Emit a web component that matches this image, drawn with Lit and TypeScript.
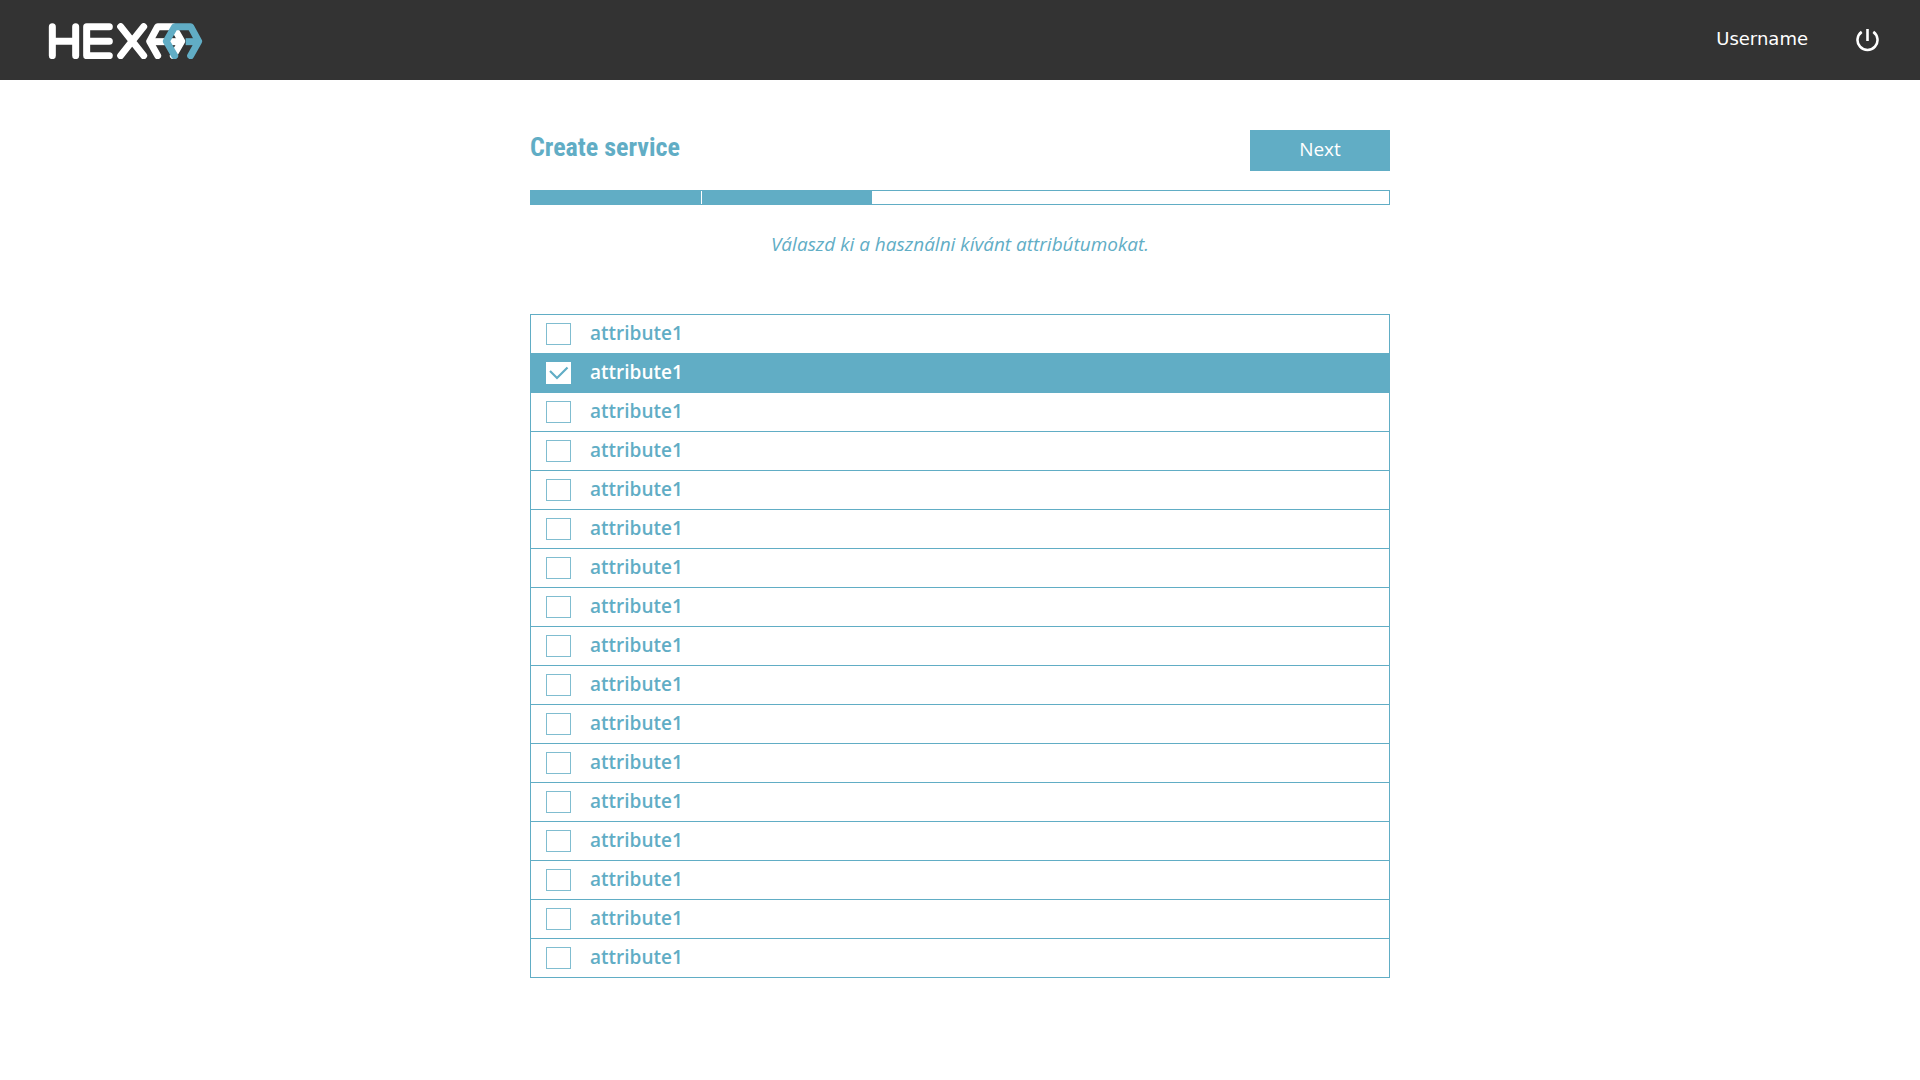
import { LitElement, html, css } from "lit";
import { customElement, state } from "lit/decorators.js";
import { classMap } from "lit/directives/class-map.js";

interface Attribute {
  name: string;
  selected: boolean;
}

@customElement("app-logo")
export class AppLogo extends LitElement {
  static styles = css`
    :host {
      display: block;
    }
    .logo {
      display: block;
      width: 156px;
      height: 36px;
      fill: none;
      stroke-width: 21;
      stroke-linecap: round;
      stroke-linejoin: round;
    }
    .light {
      stroke: #fff;
    }
    .accent {
      stroke: #61adc5;
    }
    .bar {
      stroke-linecap: butt;
    }
  `;

  render() {
    return html`
      <svg class="logo" viewBox="24 39 468 108" role="img" aria-label="HEXAA">
        <g class="light">
          <path d="M37 50V137M107 50V137M37 94H107" />
          <path d="M208 50H140V137H208M140 94H208" />
          <path d="M242 50L311 137M311 50L242 137" />
          <path d="M353 137L329 94L353 50H400L425 94L400 137" />
          <path class="bar" d="M330 95H423" />
        </g>
        <g class="accent">
          <path d="M404 137L379 94L404 50H452L476 94L452 137" />
          <path class="bar" d="M437 95H475" />
        </g>
      </svg>
    `;
  }
}

@customElement("app-header")
export class AppHeader extends LitElement {
  static styles = css`
    :host {
      display: block;
    }
    .bar {
      display: flex;
      align-items: center;
      justify-content: space-between;
      min-height: 80px;
      padding: 0 40px 0 48px;
      box-sizing: border-box;
      background: #333;
      color: #fff;
    }
    .home {
      display: block;
      padding-top: 2px;
    }
    .account {
      display: flex;
      align-items: center;
      gap: 48px;
      font: 18px/24px "DejaVu Sans", sans-serif;
    }
    .user {
      padding-bottom: 2px;
    }
    .power {
      display: block;
      padding: 0;
      border: 0;
      background: none;
      color: inherit;
      cursor: pointer;
    }
    .icon {
      display: block;
      width: 24px;
      height: 24px;
      fill: none;
      stroke: currentColor;
      stroke-width: 2.6;
    }
  `;

  render() {
    return html`
      <header class="bar">
        <a class="home" href="#"><app-logo></app-logo></a>
        <div class="account">
          <span class="user">Username</span>
          <button class="power" type="button" aria-label="Log out">
            <svg class="icon" viewBox="0 0 24 24" aria-hidden="true">
              <path d="M11.5 1V13" />
              <path d="M5.7 3.9A10 10 0 1 0 17.3 3.9" />
            </svg>
          </button>
        </div>
      </header>
    `;
  }
}

@customElement("step-progress")
export class StepProgress extends LitElement {
  static properties = {
    steps: { type: Number },
    done: { type: Number },
  };

  declare steps: number;
  declare done: number;

  static styles = css`
    :host {
      display: block;
    }
    .track {
      display: flex;
      gap: 1px;
      height: 13px;
      padding-right: 4px;
      border: 1px solid #61adc5;
    }
    .step {
      flex: 1;
    }
    .filled {
      background: #61adc5;
    }
  `;

  render() {
    return html`
      <div
        class="track"
        role="progressbar"
        aria-label="Progress"
        aria-valuemin="0"
        aria-valuemax=${this.steps}
        aria-valuenow=${this.done}
      >
        ${Array.from(
          { length: this.steps },
          (_, i) =>
            html`<span class=${classMap({ step: true, filled: i < this.done })}></span>`
        )}
      </div>
    `;
  }
}

@customElement("app-root")
export class AppRoot extends LitElement {
  @state()
  private attributesList: Attribute[] = Array.from({ length: 17 }, (_, i) => ({
    name: "attribute1",
    selected: i === 1,
  }));

  static styles = css`
    :host {
      display: block;
      background: #fff;
      color: #61adc5;
      font-family: "Open Sans", "Noto Sans", sans-serif;
    }
    .content {
      max-width: 860px;
      margin: 0 auto;
      padding: 50px 0 100px;
    }
    .heading {
      display: flex;
      align-items: center;
      justify-content: space-between;
      margin-bottom: 19px;
    }
    .title {
      margin: 0;
      padding-bottom: 8px;
      font: 700 26px/32px "Roboto Condensed", Roboto, sans-serif;
    }
    .next {
      width: 140px;
      height: 41px;
      padding: 0 0 4px;
      border: 0;
      background: #61adc5;
      color: #fff;
      font: 19px/24px "Open Sans", "Noto Sans", sans-serif;
      cursor: pointer;
    }
    .hint {
      margin: 24px 0 55px;
      font-size: 19px;
      line-height: 30px;
      font-style: italic;
      text-align: center;
    }
    .list {
      margin: 0;
      padding: 0;
      border: 1px solid #61adc5;
      list-style: none;
    }
    .item + .item {
      border-top: 1px solid #61adc5;
    }
    .row {
      display: flex;
      align-items: center;
      gap: 19px;
      min-height: 38px;
      padding: 0 15px;
      font-size: 19px;
      line-height: 24px;
      font-weight: 600;
      cursor: pointer;
    }
    .selected {
      background: #61adc5;
      color: #fff;
    }
    .tick {
      display: grid;
    }
    .box,
    .mark {
      grid-area: 1 / 1;
      box-sizing: border-box;
      width: 25px;
      height: 22px;
      margin: 0;
    }
    .box {
      appearance: none;
      border: 1px solid #80bdd0;
      background: #fff;
      cursor: pointer;
    }
    .mark {
      fill: none;
      stroke: #61adc5;
      stroke-width: 2.2;
      visibility: hidden;
      pointer-events: none;
    }
    .box:checked {
      border-color: #fff;
    }
    .box:checked + .mark {
      visibility: visible;
    }
    .name {
      padding-bottom: 2px;
    }
  `;

  private toggle(index: number) {
    this.attributesList = this.attributesList.map((a, i) =>
      i === index ? { ...a, selected: !a.selected } : a
    );
  }

  render() {
    return html`
      <app-header></app-header>
      <main class="content">
        <div class="heading">
          <h1 class="title">Create service</h1>
          <button class="next" type="button">Next</button>
        </div>
        <step-progress .steps=${5} .done=${2}></step-progress>
        <p class="hint" lang="hu">Válaszd ki a használni kívánt attribútumokat.</p>
        <ul class="list">
          ${this.attributesList.map(
            (a, i) => html`
              <li class="item">
                <label class=${classMap({ row: true, selected: a.selected })}>
                  <span class="tick">
                    <input
                      class="box"
                      type="checkbox"
                      .checked=${a.selected}
                      @change=${() => this.toggle(i)}
                    />
                    <svg class="mark" viewBox="0 0 25 22" aria-hidden="true">
                      <path d="M4 9L11 16L21.5 5.5" />
                    </svg>
                  </span>
                  <span class="name">${a.name}</span>
                </label>
              </li>
            `
          )}
        </ul>
      </main>
    `;
  }
}
